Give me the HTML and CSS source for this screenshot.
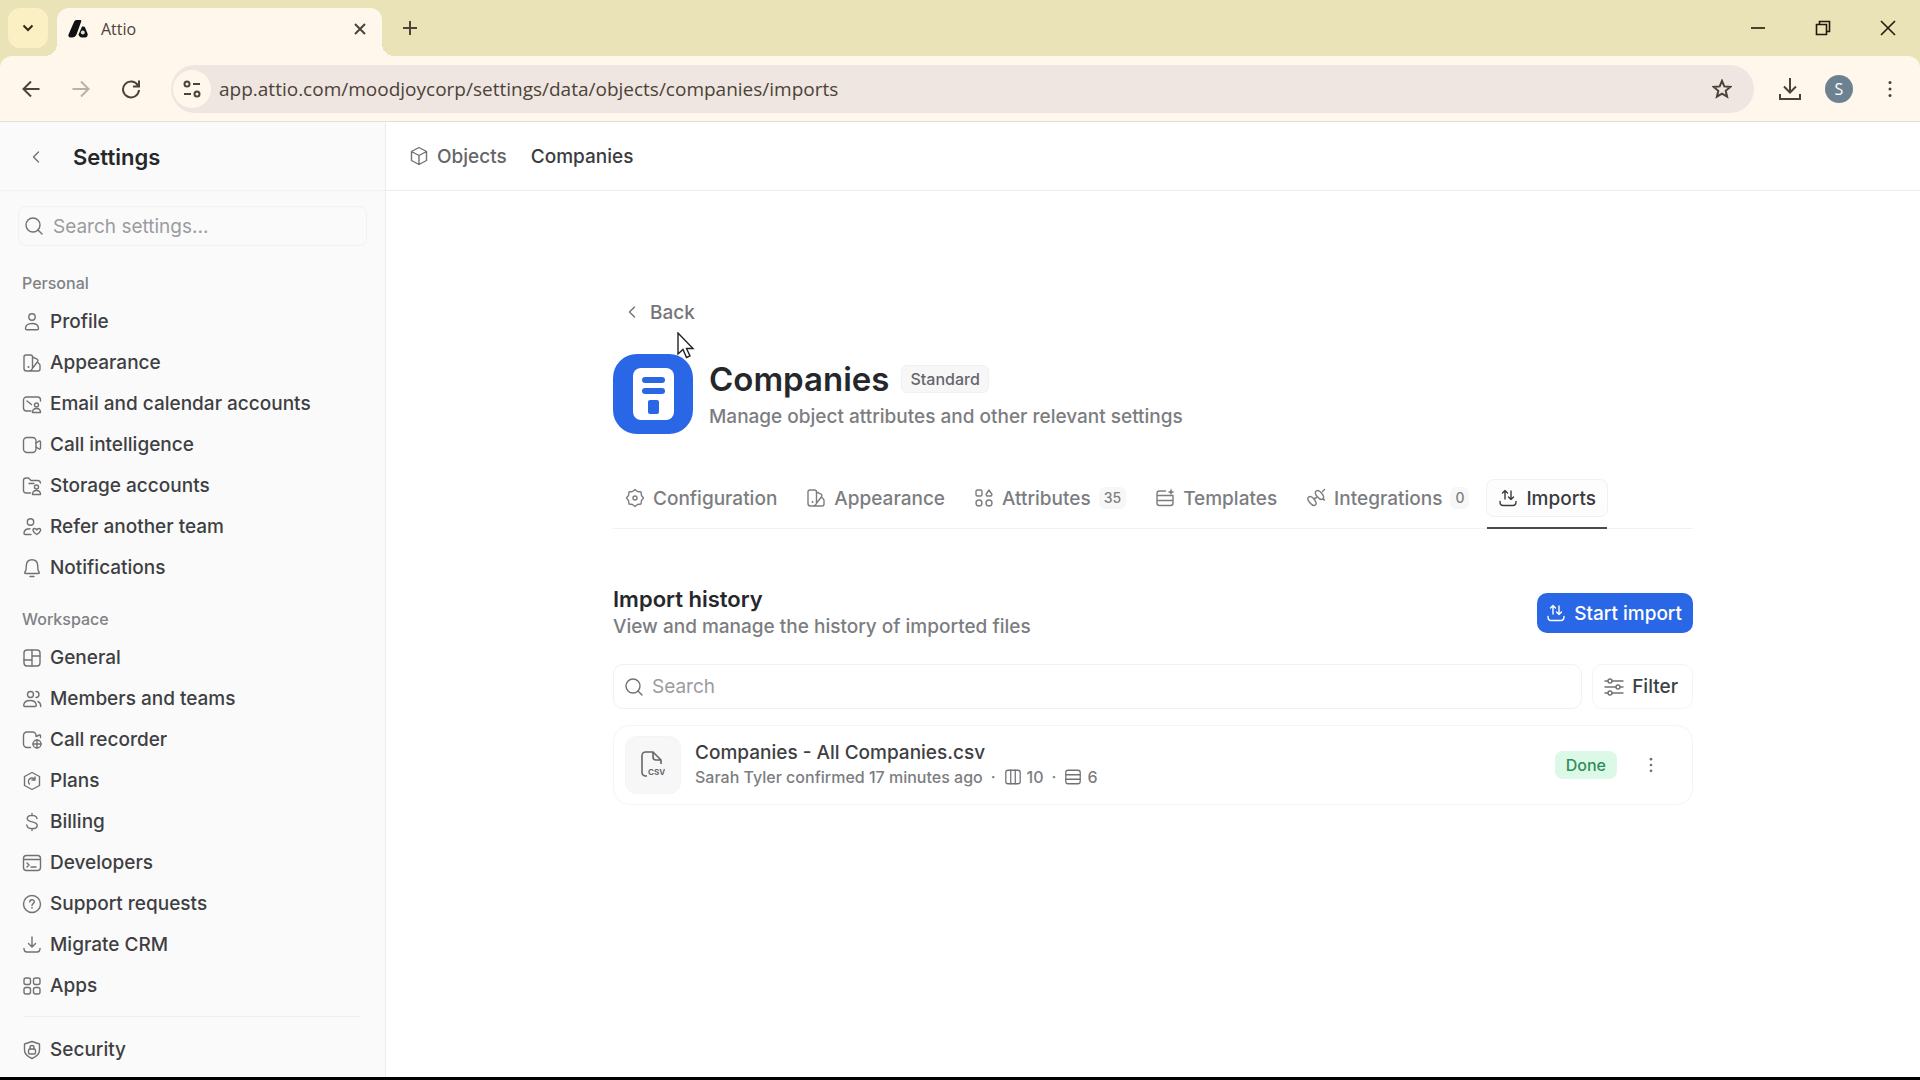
FILE: index.html
```
<!DOCTYPE html>
<html lang="en">
<head>
  <meta charset="UTF-8" />
  <title>Attio</title>
  <link rel="stylesheet" href="styles.css">
</head>
<body>
  <!-- Icon sprite -->
  <svg class="sprite" aria-hidden="true">
    <symbol id="i-search" viewBox="0 0 20 20"><circle cx="9" cy="9" r="7"/><path d="M14 14l4 4"/></symbol>
    <symbol id="i-left" viewBox="0 0 20 20"><path d="M12.500 5L7.500 10l5 5"/></symbol>
    <symbol id="i-cube" viewBox="0 0 20 20"><path d="M10 1.500l7.500 4v9L10 18.500l-7.500-4v-9zM2.500 5.500L10 9.500l7.500-4M10 9.500v9"/></symbol>
    <symbol id="i-user" viewBox="0 0 20 20"><circle cx="10" cy="5" r="3.200"/><path d="M10 11.500c-4 0-6.500 2-6.500 5 0 .800.500 1.200 1.200 1.200h10.600c.700 0 1.200-.400 1.200-1.200 0-3-2.500-5-6.500-5z"/></symbol>
    <symbol id="i-palette" viewBox="0 0 20 20"><path d="M7 18H4.500A2.500 2.500 0 0 1 2 15.500V4a2 2 0 0 1 2-2h4.500a2 2 0 0 1 2 2v10.500A3.500 3.500 0 0 1 7 18h9a2 2 0 0 0 2-2v-3.500c0-1-.400-1.500-1-2L15.800 9.500M10.500 4l4 1.800a2 2 0 0 1 1.200 2.700L10.300 15.500"/><circle class="dot" cx="6.500" cy="14" r="1"/></symbol>
    <symbol id="i-mail" viewBox="0 0 20 20"><path d="M9 17H4.500A3 3 0 0 1 1.500 14V6a3 3 0 0 1 3-3h11a3 3 0 0 1 3 3v1M5 7l4.500 3.500M10.500 18.500c0-2.500 1.500-4 4-4s4 1.500 4 4z"/><circle cx="14.500" cy="11" r="2"/></symbol>
    <symbol id="i-video" viewBox="0 0 20 20"><rect x="1.500" y="2.500" width="12.500" height="15" rx="3.500"/><path d="M14 8l3-1.800c.700-.400 1.500 0 1.500.800v6c0 .800-.800 1.200-1.500.800L14 12"/></symbol>
    <symbol id="i-folder" viewBox="0 0 20 20"><path d="M8.500 17H4a2.500 2.500 0 0 1-2.500-2.500v-10A2.500 2.500 0 0 1 4 2h2.500l2.500 2.500h6.500a3 3 0 0 1 3 2.500M7 7.500h5M10.500 18.500c0-2.500 1.500-4 4-4s4 1.500 4 4z"/><circle cx="14.500" cy="11" r="2"/></symbol>
    <symbol id="i-heart" viewBox="0 0 20 20"><circle cx="8.500" cy="5" r="3.200"/><path d="M9 17.500H3.200c-.700 0-1.200-.500-1.200-1.200 0-2.800 2.500-4.600 6-4.600M14.800 17.500c-5-3-4.300-6-2.300-6 1.300 0 2 .700 2.300 1.500.300-.800 1-1.500 2.300-1.500 2 0 2.700 3-2.300 6z"/></symbol>
    <symbol id="i-bell" viewBox="0 0 20 20"><path d="M10 1.800c-3.500 0-5.500 2.500-5.700 5.700L4 12l-1.200 2.400c-.300.600 0 1.100.700 1.100h13c.700 0 1-.500.700-1.100L16 12l-.300-4.500C15.500 4.300 13.500 1.800 10 1.800zM8 18.500h4"/></symbol>
    <symbol id="i-layout" viewBox="0 0 20 20"><rect x="2" y="2" width="16" height="16" rx="3"/><path d="M10 2v16M2 12h8M10 8h8"/></symbol>
    <symbol id="i-users" viewBox="0 0 20 20"><circle cx="8.500" cy="5.500" r="3"/><path d="M8 11.500c-3.700 0-6 1.800-6.300 4.500-.100.800.400 1.500 1.200 1.500h10.200c.800 0 1.300-.700 1.200-1.500-.300-2.700-2.600-4.500-6.300-4.500zM14 2.500a3 3 0 0 1 0 6M16 12.500c1.800.800 2.800 2.500 2.700 5"/></symbol>
    <symbol id="i-recorder" viewBox="0 0 20 20"><path d="M8.500 17.500H5A3.500 3.500 0 0 1 1.500 14V5.500A3.500 3.500 0 0 1 5 2h5.500A3.500 3.500 0 0 1 14 5.500v1L17.500 5c.600-.200 1 .200 1 .800v1.700"/><circle cx="15" cy="14" r="4"/><path d="M11 14h8M15 10v8"/></symbol>
    <symbol id="i-plans" viewBox="0 0 20 20"><path d="M10 1.500L17.500 5.500v9L10 18.500l-7.500-4v-9z"/><path d="M7.500 13a3.500 3.500 0 0 1 5-5L13 9M13 6v3h-3"/></symbol>
    <symbol id="i-dollar" viewBox="0 0 20 20"><path d="M15 6.500C14.600 4.500 12.800 3.400 10 3.400c-3 0-4.800 1.200-4.800 3.200C5.200 11.300 15.200 8.500 15.200 13.400c0 2-1.900 3.200-5.200 3.200-3 0-5-1.300-5.200-3.600M10 1.500v2M10 16.500v2"/></symbol>
    <symbol id="i-terminal" viewBox="0 0 20 20"><rect x="1.500" y="2.500" width="17" height="15" rx="3"/><path d="M2 6.500h16M5 10l2 2-2 2M9 14h5"/></symbol>
    <symbol id="i-help" viewBox="0 0 20 20"><circle cx="10" cy="10" r="8.500"/><path d="M7.800 8c0-3 4.500-2.900 4.500-.200 0 1.800-2.300 1.800-2.300 3.700"/><circle class="dot" cx="10" cy="13.800" r=".900"/></symbol>
    <symbol id="i-down" viewBox="0 0 20 20"><path d="M10 2v9.500M6.500 8.500L10 12l3.500-3.500M2 13.500c0 2.500 1 3.500 3 3.500h10c2 0 3-1 3-3.500"/></symbol>
    <symbol id="i-apps" viewBox="0 0 20 20"><rect x="2" y="2" width="6.500" height="6.500" rx="2"/><rect x="11.500" y="2" width="6.500" height="6.500" rx="2"/><rect x="2" y="11.500" width="6.500" height="6.500" rx="2"/><rect x="11.500" y="11.500" width="6.500" height="6.500" rx="2"/></symbol>
    <symbol id="i-shield" viewBox="0 0 20 20"><path d="M10 1.500l7.500 2.500v6c0 4-2.500 6.500-7.500 8.500-5-2-7.500-4.500-7.500-8.500V4z"/><rect x="6.500" y="9" width="7" height="5" rx="1.500"/><path d="M8 9V7.500a2 2 0 0 1 4 0V9"/></symbol>
    <symbol id="i-gear" viewBox="0 0 20 20"><path d="M10 1.500l2.500 2 3.500.5.500 3.500 2 2.500-2 2.500-.5 3.500-3.500.5-2.500 2-2.500-2-3.500-.5-.5-3.500-2-2.500 2-2.500.5-3.500 3.500-.5z"/><circle cx="10" cy="10" r="2"/></symbol>
    <symbol id="i-attr" viewBox="0 0 20 20"><rect x="2" y="2" width="6" height="6" rx="1.500"/><path d="M15 2l3 4.500-1 1.500h-4l-1-1.500z"/><circle cx="5" cy="15" r="3"/><circle cx="15" cy="15" r="3"/></symbol>
    <symbol id="i-template" viewBox="0 0 20 20"><path d="M10.500 3H4.500A2.500 2.500 0 0 0 2 5.500v9.500A2.500 2.500 0 0 0 4.500 17.500h11A2.500 2.500 0 0 0 18 15V8M2 7.500h16M2 12.500h16"/><path class="dot" d="M16 .5l1 2.500 2.500 1-2.500 1-1 2.500-1-2.500-2.500-1 2.500-1z"/></symbol>
    <symbol id="i-link" viewBox="0 0 20 20"><ellipse cx="6" cy="13" rx="5.200" ry="2.800" transform="rotate(50 6 13)"/><ellipse cx="13.500" cy="7" rx="5.200" ry="2.800" transform="rotate(50 13.500 7)"/><path d="M8.500 10.500l2-1M16.500 3.500l2-2M16.500 11l2 1"/></symbol>
    <symbol id="i-import" viewBox="0 0 20 20"><path d="M7 11V2.500M4.500 5L7 2.500 9.500 5M13 3v8.500M10.500 9l2.500 2.500L15.500 9M2 13.500C2 16 3 17.500 5 17.500h10c2 0 3-1.500 3-4"/></symbol>
    <symbol id="i-filter" viewBox="0 0 20 20"><path d="M1 4h3M8 4h11M1 10h11M16 10h3M1 16h3M8 16h11"/><circle cx="6" cy="4" r="2"/><circle cx="14" cy="10" r="2"/><circle cx="6" cy="16" r="2"/></symbol>
    <symbol id="i-cols" viewBox="0 0 20 20"><rect x="2" y="2.500" width="16" height="15" rx="2.500"/><path d="M7.500 2.500v15M12.500 2.500v15"/></symbol>
    <symbol id="i-rows" viewBox="0 0 20 20"><rect x="2" y="2.500" width="16" height="15" rx="2.500"/><path d="M2 7.500h16M2 12.500h16"/></symbol>
    <symbol id="i-dots" viewBox="0 0 20 20"><g class="dot"><circle cx="10" cy="3.500" r="1.500"/><circle cx="10" cy="10" r="1.500"/><circle cx="10" cy="16.500" r="1.500"/></g></symbol>
  </svg>

  <!-- Browser chrome -->
  <header class="browser">
    <div class="tab-strip">
      <button class="tab-search" aria-label="Search tabs"><svg viewBox="0 0 16 16"><path d="M3.500 5.500L8 10l4.500-4.500"/></svg></button>
      <div class="tab">
        <svg class="favicon" viewBox="0 0 20 20"><path d="M8.500 1H12c1 0 1.500.600 1.200 1.500L8.500 15.500C7.700 17.500 6 18.500 4 18.500H2.500C.800 18.500 0 17 .500 15.500L6 3c.500-1.200 1.300-2 2.500-2z"/><path d="M14 7.500h1.500c.700 0 1.200.400 1.500 1l2.500 6c.700 2-.500 4-2.500 4h-3c-2 0-3.200-1.500-3.500-3z"/><circle class="hole" cx="14.800" cy="13.500" r="2"/></svg>
        <span>Attio</span>
        <button class="tab-close" aria-label="Close tab"><svg viewBox="0 0 16 16"><path d="M3 3l10 10M13 3L3 13"/></svg></button>
      </div>
      <button class="new-tab" aria-label="New tab"><svg viewBox="0 0 16 16"><path d="M8 1v14M1 8h14"/></svg></button>
      <div class="window-controls">
        <button aria-label="Minimize"><svg viewBox="0 0 16 16"><path d="M1 8h14"/></svg></button>
        <button aria-label="Restore"><svg viewBox="0 0 16 16"><path d="M1.500 4.500h10v10h-10zM4.500 4V1.500h10v10H12"/></svg></button>
        <button aria-label="Close"><svg viewBox="0 0 16 16"><path d="M1 1l14 14M15 1L1 15"/></svg></button>
      </div>
    </div>
    <div class="toolbar">
      <button aria-label="Back"><svg viewBox="0 0 20 20"><path d="M18.500 10H2.500M10 2.500L2.500 10l7.500 7.500"/></svg></button>
      <button class="off" aria-label="Forward"><svg viewBox="0 0 20 20"><path d="M1.500 10h16M10 2.500l7.500 7.500-7.500 7.500"/></svg></button>
      <button aria-label="Reload"><svg viewBox="0 0 20 20"><path d="M17 6.500A8 8 0 1 0 18 11M18 1.500v6h-6"/></svg></button>
      <div class="address">
        <span class="site-info"><svg viewBox="0 0 20 20"><circle cx="5" cy="5" r="2.500"/><path d="M11 5h7M2 15h7"/><circle cx="15" cy="15" r="2.500"/></svg></span>
        <input type="text" aria-label="Address" value="app.attio.com/moodjoycorp/settings/data/objects/companies/imports">
        <button aria-label="Bookmark"><svg viewBox="0 0 20 20"><path d="M10 1.800l2.300 5.600 6 .500-4.600 3.900 1.400 5.900L10 14.600l-5.100 3.100 1.400-5.900L1.700 7.900l6-.500z"/></svg></button>
      </div>
      <button class="download" aria-label="Downloads"><svg viewBox="0 0 24 24"><path d="M12 1v14M6 9.500l6 6 6-6M2 17v5h20v-5"/></svg></button>
      <button class="avatar" aria-label="Profile">S</button>
      <button class="menu" aria-label="Menu"><svg viewBox="0 0 20 20"><use href="#i-dots"/></svg></button>
    </div>
  </header>

  <div class="app">
    <aside class="sidebar">
      <div class="sidebar-head">
        <button aria-label="Close settings"><svg class="icon"><use href="#i-left"/></svg></button>
        <h2>Settings</h2>
      </div>
      <label class="settings-search">
        <svg class="icon"><use href="#i-search"/></svg>
        <input type="text" placeholder="Search settings..." aria-label="Search settings">
      </label>
      <nav class="menu-list">
        <h3>Personal</h3>
        <a href="#"><svg class="icon"><use href="#i-user"/></svg>Profile</a>
        <a href="#"><svg class="icon"><use href="#i-palette"/></svg>Appearance</a>
        <a href="#"><svg class="icon"><use href="#i-mail"/></svg>Email and calendar accounts</a>
        <a href="#"><svg class="icon"><use href="#i-video"/></svg>Call intelligence</a>
        <a href="#"><svg class="icon"><use href="#i-folder"/></svg>Storage accounts</a>
        <a href="#"><svg class="icon"><use href="#i-heart"/></svg>Refer another team</a>
        <a href="#"><svg class="icon"><use href="#i-bell"/></svg>Notifications</a>
      </nav>
      <nav class="menu-list workspace">
        <h3>Workspace</h3>
        <a href="#"><svg class="icon"><use href="#i-layout"/></svg>General</a>
        <a href="#"><svg class="icon"><use href="#i-users"/></svg>Members and teams</a>
        <a href="#"><svg class="icon"><use href="#i-recorder"/></svg>Call recorder</a>
        <a href="#"><svg class="icon"><use href="#i-plans"/></svg>Plans</a>
        <a href="#"><svg class="icon"><use href="#i-dollar"/></svg>Billing</a>
        <a href="#"><svg class="icon"><use href="#i-terminal"/></svg>Developers</a>
        <a href="#"><svg class="icon"><use href="#i-help"/></svg>Support requests</a>
        <a href="#"><svg class="icon"><use href="#i-down"/></svg>Migrate CRM</a>
        <a href="#"><svg class="icon"><use href="#i-apps"/></svg>Apps</a>
        <hr>
        <a href="#"><svg class="icon"><use href="#i-shield"/></svg>Security</a>
      </nav>
    </aside>

    <main>
      <nav class="breadcrumb">
        <a href="#"><svg class="icon"><use href="#i-cube"/></svg>Objects</a>
        <a class="current" href="#">Companies</a>
      </nav>

      <div class="content">
        <a class="back" href="#"><svg class="icon"><use href="#i-left"/></svg>Back</a>

        <div class="object-head">
          <div class="object-icon">
            <svg viewBox="0 0 80 80"><rect class="white" x="20" y="14" width="41" height="52" rx="8"/><rect x="29" y="23" width="23" height="6" rx="3"/><rect x="29" y="34" width="23" height="6" rx="3"/><rect x="35" y="46" width="11" height="14" rx="2"/></svg>
          </div>
          <div>
            <div class="title-row">
              <h1>Companies</h1>
              <span class="tag">Standard</span>
            </div>
            <p>Manage object attributes and other relevant settings</p>
          </div>
        </div>

        <nav class="tabs">
          <a href="#"><svg class="icon"><use href="#i-gear"/></svg>Configuration</a>
          <a href="#"><svg class="icon"><use href="#i-palette"/></svg>Appearance</a>
          <a href="#"><svg class="icon"><use href="#i-attr"/></svg>Attributes<span class="count">35</span></a>
          <a href="#"><svg class="icon"><use href="#i-template"/></svg>Templates</a>
          <a href="#"><svg class="icon"><use href="#i-link"/></svg>Integrations<span class="count">0</span></a>
          <a class="active" href="#"><svg class="icon"><use href="#i-import"/></svg>Imports</a>
        </nav>

        <section class="history">
          <div class="history-head">
            <div>
              <h2>Import history</h2>
              <p>View and manage the history of imported files</p>
            </div>
            <button class="start-btn"><svg class="icon"><use href="#i-import"/></svg>Start import</button>
          </div>

          <div class="controls">
            <label class="search-box">
              <svg class="icon"><use href="#i-search"/></svg>
              <input type="text" placeholder="Search" aria-label="Search imports">
            </label>
            <button class="filter-btn"><svg class="icon"><use href="#i-filter"/></svg>Filter</button>
          </div>

          <div class="import-row">
            <div class="file-icon">
              <svg viewBox="0 0 24 28"><path d="M6 25H4.500A3.500 3.500 0 0 1 1 21.500v-17A3.500 3.500 0 0 1 4.500 1H12l8 8v4M12 1v5a3 3 0 0 0 3 3h5"/><text x="7" y="24">CSV</text></svg>
            </div>
            <div class="import-info">
              <h4>Companies - All Companies.csv</h4>
              <p>Sarah Tyler confirmed 17 minutes ago <span>·</span> <svg class="icon"><use href="#i-cols"/></svg> 10 <span>·</span> <svg class="icon"><use href="#i-rows"/></svg> 6</p>
            </div>
            <span class="status">Done</span>
            <button class="more" aria-label="More"><svg class="icon"><use href="#i-dots"/></svg></button>
          </div>
        </section>
      </div>
    </main>
  </div>

  <svg class="cursor" viewBox="0 0 18 28"><path d="M1 1v21l5-4.500 3.500 8 3.500-1.500-3.500-7.500H16z"/></svg>
</body>
</html>
```
FILE: styles.css
```
* {
  box-sizing: border-box;
}

body {
  margin: 0;
  height: 100vh;
  display: flex;
  flex-direction: column;
  overflow: hidden;
  border-bottom: 3px solid #000;
  font-family: Inter, sans-serif;
  font-size: 19px;
  font-weight: 500;
  color: #3e3f43;
  background: #fff;
}

h1, h2, h3, h4, p {
  margin: 0;
}

a {
  color: inherit;
  text-decoration: none;
}

button {
  border: none;
  padding: 0;
  background: none;
  font: inherit;
  color: inherit;
  cursor: pointer;
}

input {
  flex: 1;
  min-width: 0;
  border: none;
  padding: 0;
  outline: none;
  background: none;
  font: inherit;
  color: inherit;
}

input::placeholder {
  color: #9b9c9f;
  opacity: 1;
}

svg {
  display: block;
  flex-shrink: 0;
  fill: none;
  stroke: currentColor;
  stroke-width: 2;
}

.sprite {
  position: absolute;
  width: 0;
  height: 0;
}

.icon {
  width: 20px;
  height: 20px;
  stroke-width: 1.4;
  stroke-linecap: round;
  stroke-linejoin: round;
  color: #707175;
}

.dot {
  fill: currentColor;
  stroke: none;
}

/* Browser chrome */
.browser {
  flex-shrink: 0;
  background: #ebe3b8;
  font-family: "Open Sans", sans-serif;
  font-weight: 400;
  color: #4b4238;
}

.tab-strip {
  display: flex;
  align-items: center;
  height: 56px;
  padding-left: 8px;
}

.tab-search {
  width: 40px;
  height: 40px;
  border-radius: 12px;
  background: #faf0c4;
}

.tab-search svg {
  width: 16px;
  height: 16px;
  margin: auto;
  stroke: #2f2a12;
}

.tab {
  position: relative;
  align-self: flex-end;
  display: flex;
  align-items: center;
  gap: 13px;
  width: 325px;
  height: 48px;
  margin-left: 9px;
  padding: 0 14px 6px 11px;
  border-radius: 12px 12px 0 0;
  background: #fff7ec;
  font-size: 16px;
}

.tab::before,
.tab::after {
  content: "";
  position: absolute;
  bottom: 0;
  width: 12px;
  height: 12px;
}

.tab::before {
  right: 100%;
  background: radial-gradient(circle at 0 0, transparent 12px, #fff7ec 12px);
}

.tab::after {
  left: 100%;
  background: radial-gradient(circle at 100% 0, transparent 12px, #fff7ec 12px);
}

.favicon {
  width: 20px;
  height: 20px;
  fill: #111;
  stroke: none;
}

.favicon .hole {
  fill: #ddd;
}

.tab-close {
  margin-left: auto;
}

.tab-close svg,
.new-tab svg {
  width: 16px;
  height: 16px;
}

.new-tab {
  margin-left: 20px;
}

.window-controls {
  display: flex;
  align-items: center;
  gap: 49px;
  margin-left: auto;
  padding-right: 24px;
  color: #1f1a0a;
}

.window-controls svg {
  width: 16px;
  height: 16px;
  stroke-width: 1.6;
}

.toolbar {
  display: flex;
  align-items: center;
  height: 66px;
  padding: 0 20px 0 21px;
  border-bottom: 1px solid #e3e0db;
  border-radius: 12px 12px 0 0;
  background: #fff7ec;
}

.toolbar > button {
  margin-right: 30px;
}

.toolbar svg {
  width: 20px;
  height: 20px;
}

.toolbar .off {
  color: #b9b0a6;
}

.address {
  flex: 1;
  display: flex;
  align-items: center;
  gap: 8px;
  height: 48px;
  padding: 0 22px 0 2px;
  border-radius: 24px;
  background: #efe6e1;
}

.site-info {
  display: grid;
  place-items: center;
  width: 38px;
  height: 38px;
  border-radius: 50%;
  background: #fff7ec;
}

.toolbar .download {
  margin: 0 25px 0 26px;
}

.toolbar .download svg {
  width: 24px;
  height: 24px;
  margin: 0 -2px;
}

.toolbar .avatar {
  width: 28px;
  height: 28px;
  margin-right: 27px;
  border-radius: 50%;
  background: #6d8290;
  color: #fff;
  font-size: 16px;
  line-height: 28px;
}

.toolbar .menu {
  margin-right: 0;
}

/* App */
.app {
  flex: 1;
  display: flex;
  min-height: 0;
}

.sidebar {
  width: 386px;
  flex-shrink: 0;
  overflow: hidden;
  border-right: 1px solid #ececee;
  background: #fafafa;
}

.sidebar-head {
  display: flex;
  align-items: center;
  gap: 27px;
  height: 69px;
  padding: 2px 0 0 26px;
  border-bottom: 1px solid #f1f1f3;
}

.sidebar-head h2 {
  font-size: 22px;
  font-weight: 600;
  color: #26272b;
}

.settings-search {
  display: flex;
  align-items: center;
  gap: 9px;
  height: 40px;
  margin: 15px 18px 0;
  padding: 0 5px;
  border: 1px solid #f1f1f3;
  border-radius: 8px;
  font-weight: 400;
}

.menu-list {
  padding-top: 19px;
}

.workspace {
  padding-top: 13px;
}

.menu-list h3 {
  height: 36px;
  padding-left: 22px;
  font-size: 16px;
  font-weight: 500;
  line-height: 36px;
  color: #808185;
}

.menu-list a {
  display: flex;
  align-items: center;
  gap: 8px;
  height: 41px;
  padding-left: 22px;
}

.menu-list hr {
  margin: 10px 24px 12px;
  border: none;
  border-top: 1px solid #efeff1;
}

main {
  flex: 1;
  min-width: 0;
}

.breadcrumb {
  display: flex;
  align-items: center;
  gap: 24px;
  height: 69px;
  padding-left: 23px;
  border-bottom: 1px solid #ececee;
}

.breadcrumb a {
  display: flex;
  align-items: center;
  gap: 8px;
  color: #65666a;
}

.breadcrumb .current {
  color: #3a3b3f;
}

.content {
  max-width: 1080px;
  margin: 0 auto;
  padding-top: 107px;
}

.back {
  display: inline-flex;
  align-items: center;
  gap: 8px;
  height: 28px;
  padding-left: 9px;
  color: #75767a;
}

.object-head {
  display: flex;
  align-items: center;
  gap: 16px;
  margin-top: 27px;
}

.object-icon {
  width: 80px;
  height: 80px;
  border-radius: 24px;
  background: #2a67e6;
}

.object-icon svg {
  fill: #2a67e6;
  stroke: none;
}

.object-icon .white {
  fill: #fff;
}

.title-row {
  display: flex;
  align-items: center;
  gap: 12px;
}

.title-row h1 {
  font-size: 33px;
  font-weight: 600;
  line-height: 42px;
  color: #26272b;
}

.tag {
  padding: 0 8px;
  border: 1px solid #f1f1f3;
  border-radius: 6px;
  background: #f7f7f8;
  font-size: 16px;
  line-height: 26px;
  color: #65666a;
}

.object-head p {
  padding-top: 3px;
}

.object-head p,
.history-head p {
  line-height: 28px;
  color: #7c7d81;
}

/* Tabs */
.tabs {
  display: flex;
  gap: 5px;
  height: 50px;
  margin-top: 45px;
  border-bottom: 1px solid #f1f1f3;
}

.tabs a {
  position: relative;
  display: flex;
  align-items: center;
  gap: 8px;
  height: 38px;
  padding: 0 11px;
  border: 1px solid transparent;
  border-radius: 8px;
  color: #7c7d81;
}

.tabs .icon {
  color: inherit;
}

.tabs .active {
  border-color: #f1f1f3;
  background: #fdfdfd;
  color: #3a3b3f;
}

.tabs .active::after {
  content: "";
  position: absolute;
  left: 0;
  right: 0;
  bottom: -13px;
  height: 2px;
  background: #4a4b4f;
}

.count {
  padding: 0 5px;
  border-radius: 6px;
  background: #f7f7f8;
  font-size: 14px;
  line-height: 22px;
}

/* Import history */
.history {
  margin-top: 56px;
}

.history-head,
.controls,
.import-row {
  display: flex;
  align-items: center;
}

.history-head {
  justify-content: space-between;
}

.history-head h2 {
  font-size: 22px;
  font-weight: 600;
  line-height: 28px;
  color: #26272b;
}

.start-btn {
  display: flex;
  align-items: center;
  gap: 8px;
  height: 40px;
  padding: 0 11px 0 9px;
  border-radius: 10px;
  background: #2a67e6;
  color: #fff;
}

.start-btn .icon {
  color: #fff;
}

.controls {
  gap: 10px;
  margin-top: 23px;
}

.search-box {
  flex: 1;
  display: flex;
  align-items: center;
  gap: 8px;
  height: 45px;
  padding: 0 10px;
  border: 1px solid #f1f1f3;
  border-radius: 10px;
  font-weight: 400;
}

.filter-btn {
  display: flex;
  align-items: center;
  gap: 8px;
  height: 45px;
  padding: 0 14px 0 11px;
  border: 1px solid #f4f4f5;
  border-radius: 10px;
}

.import-row {
  gap: 14px;
  height: 80px;
  margin-top: 16px;
  padding: 0 32px 0 11px;
  border: 1px solid #f4f4f5;
  border-radius: 16px;
}

.file-icon {
  display: grid;
  place-items: center;
  width: 56px;
  height: 58px;
  border: 1px solid #f4f4f5;
  border-radius: 12px;
  background: #f7f7f8;
  color: #65666a;
}

.file-icon svg {
  width: 24px;
  height: 28px;
  stroke-width: 1.6;
}

.file-icon text {
  fill: currentColor;
  stroke: none;
  font-size: 8px;
  font-weight: 700;
}

.import-info {
  flex: 1;
}

.import-info h4 {
  font-size: 19px;
  font-weight: 500;
  line-height: 24px;
}

.import-info p {
  display: flex;
  align-items: center;
  gap: 5px;
  font-size: 16px;
  line-height: 24px;
  color: #7c7d81;
}

.import-info .icon {
  width: 18px;
  height: 18px;
}

.import-info span {
  margin: 0 3px;
}

.status {
  padding: 0 11px;
  border-radius: 8px;
  background: #dcf9e8;
  font-size: 16px;
  line-height: 28px;
  color: #2f8f5b;
}

.more {
  margin-left: 11px;
}

.more .icon {
  width: 18px;
  height: 18px;
}

.cursor {
  position: absolute;
  left: 677px;
  top: 332px;
  width: 18px;
  height: 28px;
  fill: #fff;
  stroke: #222;
  stroke-width: 1.4;
}
```
